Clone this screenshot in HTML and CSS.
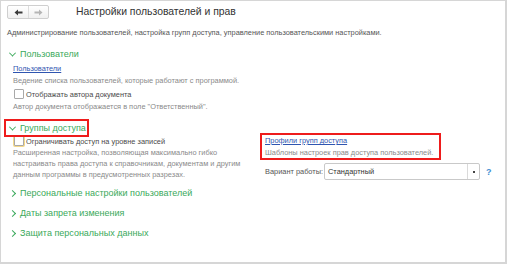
FILE: index.html
```html
<!DOCTYPE html>
<html lang="ru">
<head>
    <meta charset="UTF-8">
    <title>Настройки пользователей и прав</title>
    <link rel="stylesheet" href="styles.css">
</head>
<body>
<div class="window">
    <div class="topbar">
        <div class="nav-buttons">
            <div class="nav-btn">
                <svg width="9" height="7" viewBox="0 0 9 7"><path d="M0.5 3.5 L4 0.5 V2.5 H8.5 V4.5 H4 V6.5 Z" fill="#3a3a3a"/></svg>
            </div>
            <div class="nav-btn">
                <svg width="9" height="7" viewBox="0 0 9 7"><path d="M8.5 3.5 L5 0.5 V2.5 H0.5 V4.5 H5 V6.5 Z" fill="#b5b5b5"/></svg>
            </div>
        </div>
        <div class="title">Настройки пользователей и прав</div>
    </div>

    <div class="page-desc">Администрирование пользователей, настройка групп доступа, управление пользовательскими настройками.</div>

    <div class="group-header">
        <span class="chevron open"></span>Пользователи
    </div>
    <div class="group-body">
        <a class="link" href="#">Пользователи</a>
        <div class="hint">Ведение списка пользователей, которые работают с программой.</div>
        <label class="check-row">
            <span class="checkbox"></span>Отображать автора документа
        </label>
        <div class="hint hint-tight">Автор документа отображается в поле "Ответственный".</div>
    </div>

    <div class="group-header marked">
        <span class="chevron open"></span>Группы доступа
    </div>
    <div class="group-body columns">
        <div class="col-left">
            <label class="check-row">
                <span class="checkbox focused"></span>Ограничивать доступ на уровне записей
            </label>
            <div class="hint multi">Расширенная настройка, позволяющая максимально гибко настраивать права доступа к справочникам, документам и другим данным программы в предусмотренных разрезах.</div>
        </div>
        <div class="col-right">
            <div class="profiles">
                <a class="link" href="#">Профили групп доступа</a>
                <div class="hint">Шаблоны настроек прав доступа пользователей.</div>
            </div>
            <div class="field-row">
                <span class="field-label">Вариант работы:</span>
                <div class="select">
                    <span class="select-value">Стандартный</span>
                    <span class="select-btn"><span class="select-dot"></span></span>
                </div>
                <span class="help">?</span>
            </div>
        </div>
    </div>

    <div class="group-header collapsed">
        <span class="chevron"></span>Персональные настройки пользователей
    </div>
    <div class="group-header collapsed">
        <span class="chevron"></span>Даты запрета изменения
    </div>
    <div class="group-header collapsed">
        <span class="chevron"></span>Защита персональных данных
    </div>
</div>
</body>
</html>
```

FILE: styles.css
```css
* {
    margin: 0;
    padding: 0;
    box-sizing: border-box;
}

body {
    font-family: 'Liberation Sans', Arial, sans-serif;
    background: white;
    color: #4a4a4a;
}

.window {
    width: 507px;
    height: 264px;
    border: 1px solid #d6d6d6;
    border-right-width: 2px;
    border-bottom-width: 2px;
    padding: 4px 0 0 6px;
    overflow: hidden;
}

.topbar {
    display: flex;
    align-items: center;
    height: 14px;
}

.nav-buttons {
    display: flex;
    height: 14px;
    border: 1px solid #cfcfcf;
    border-radius: 2px;
    background: linear-gradient(#ffffff, #f0f0f0);
}

.nav-btn {
    width: 20px;
    display: flex;
    align-items: center;
    justify-content: center;
}

.nav-btn + .nav-btn {
    border-left: 1px solid #dcdcdc;
}

.title {
    margin-left: 27px;
    font-size: 10.4px;
    color: #333;
    line-height: 14px;
}

.page-desc {
    margin-top: 8px;
    font-size: 7.4px;
    line-height: 12px;
    color: #555;
}

.group-header {
    display: flex;
    align-items: center;
    width: max-content;
    margin-top: 8px;
    padding: 0 2px;
    font-size: 9px;
    line-height: 14px;
    color: #3aa95a;
}

.group-header.marked {
    margin-top: 9px;
    outline: 2px solid #ee1c1c;
    margin-left: -1px;
    padding-left: 3px;
    padding-right: 1px;
}

.group-header.collapsed {
    margin-top: 6px;
}

.chevron {
    width: 5px;
    height: 5px;
    border-right: 1.3px solid #3aa95a;
    border-bottom: 1.3px solid #3aa95a;
    transform: rotate(-45deg);
    margin: 0 5px 0 1px;
}

.chevron.open {
    transform: rotate(45deg) translate(-1px, -1px);
}

.group-body {
    padding-left: 6px;
}

.link {
    display: block;
    margin-top: 2px;
    font-size: 7.4px;
    line-height: 12px;
    color: #2f55b0;
    text-decoration: underline;
}

.hint {
    font-size: 7.4px;
    line-height: 11px;
    color: #8a8a8a;
}

.hint-tight {
    margin-top: 1px;
}

.check-row {
    display: flex;
    align-items: center;
    margin-top: 2px;
    height: 12px;
    font-size: 7.4px;
    color: #4a4a4a;
}

.checkbox {
    width: 10px;
    height: 10px;
    margin: 0 2px 0 1px;
    border: 1px solid #a9a9a9;
    border-radius: 1px;
    background: white;
}

.checkbox.focused {
    box-shadow: 0 0 0 1px #f5d98a;
}

.columns {
    display: flex;
}

.col-left {
    width: 247px;
}

.col-left .check-row {
    margin-top: 0;
}

.col-right {
    padding-left: 2px;
}

.profiles {
    width: 177px;
    padding-left: 3px;
    outline: 2px solid #ee1c1c;
}

.profiles .link {
    margin-top: 0;
}

.field-row {
    display: flex;
    align-items: center;
    margin-top: 5px;
    padding-left: 3px;
    height: 17px;
    font-size: 7.4px;
    white-space: nowrap;
}

.field-label {
    color: #555;
    width: 59px;
}

.select {
    display: flex;
    width: 156px;
    height: 17px;
    border: 1px solid #c9c9c9;
    border-radius: 2px;
    background: white;
}

.select-value {
    flex: 1;
    padding-left: 3px;
    line-height: 15px;
    color: #333;
}

.select-btn {
    width: 12px;
    border-left: 1px solid #dadada;
    display: flex;
    align-items: center;
    justify-content: center;
}

.select-dot {
    width: 2px;
    height: 2px;
    background: #444;
}

.help {
    margin-left: 6px;
    font-size: 9px;
    font-weight: bold;
    color: #3f8fd2;
}
```
